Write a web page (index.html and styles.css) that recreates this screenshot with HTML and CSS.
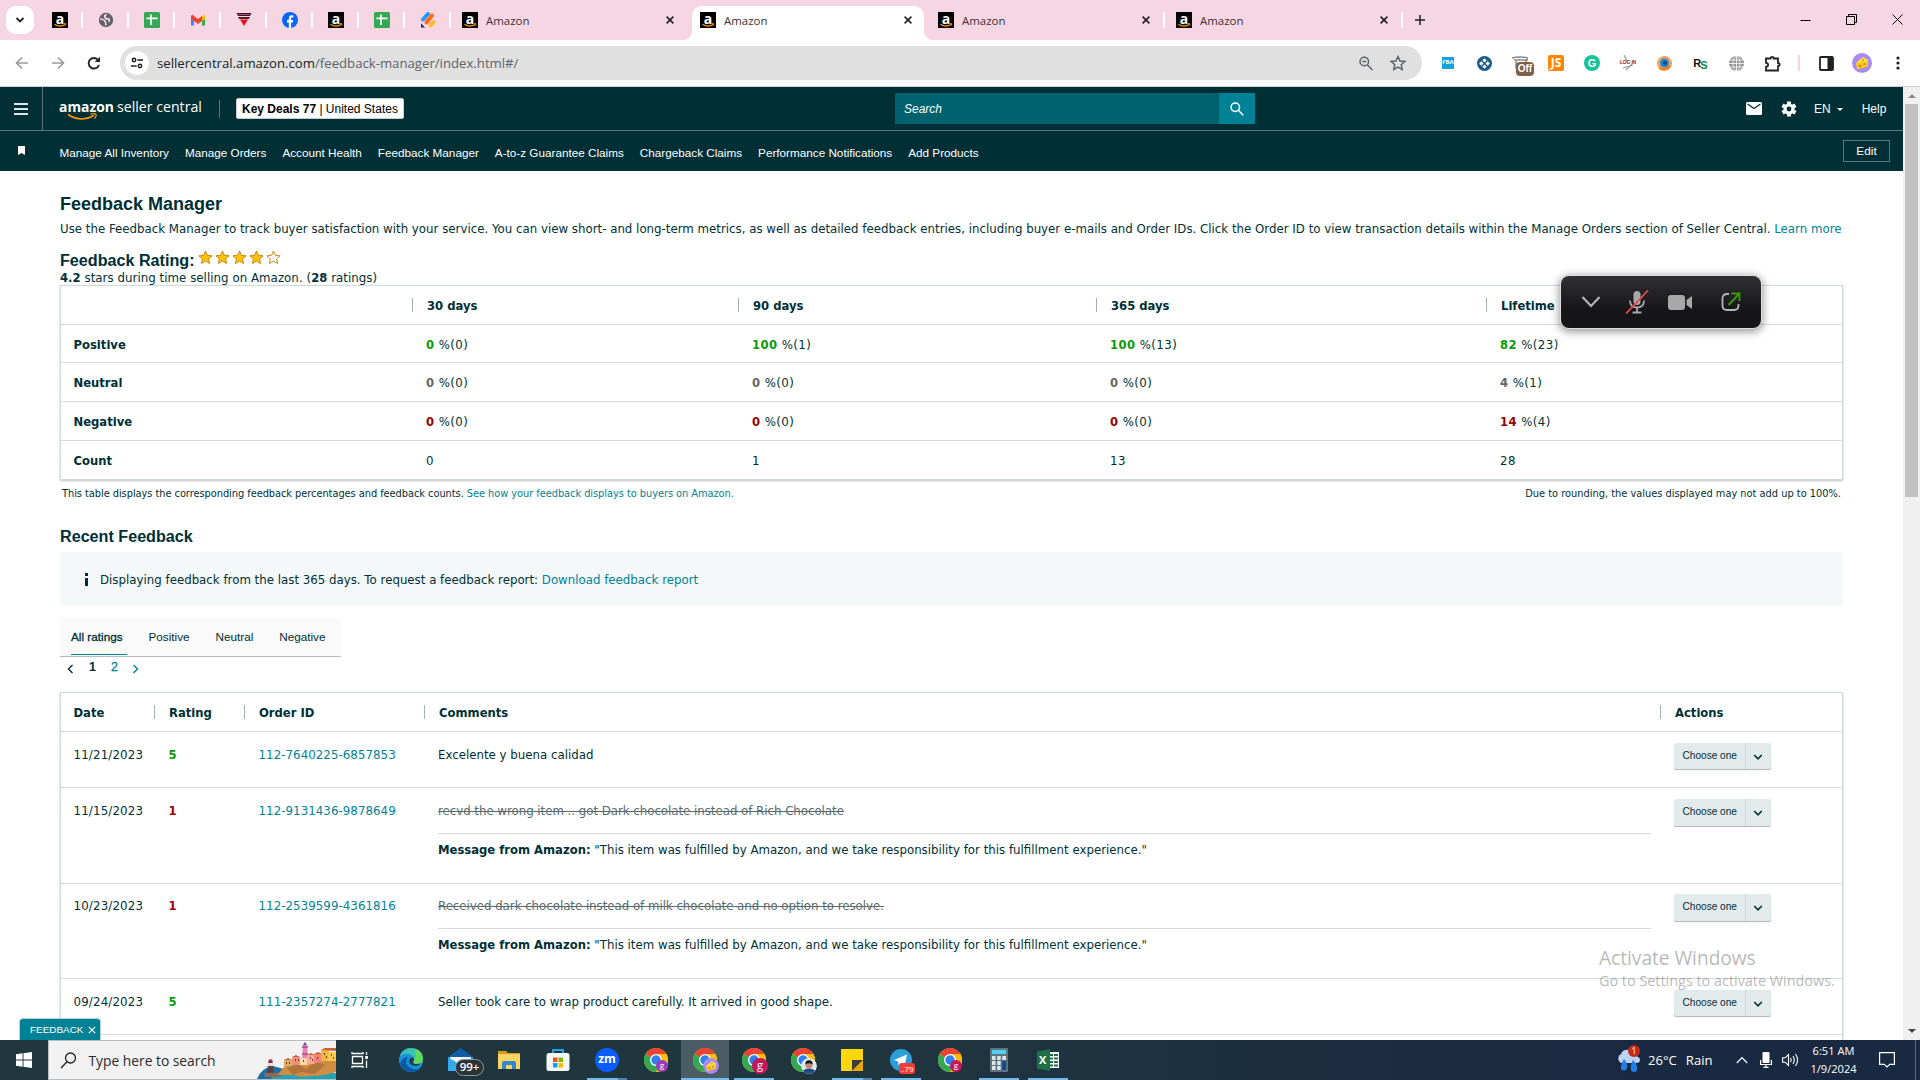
FILE: index.html
```
<!DOCTYPE html>
<html lang="en">
<head>
    <meta charset="UTF-8">
    <meta name="viewport" content="width=device-width, initial-scale=1.0">
    <title>Amazon</title>
    <link rel="stylesheet" href="styles.css">
</head>
<body>
    <!-- shared icons -->
    <svg class="defs" width="0" height="0">
        <symbol id="smile" viewBox="0 0 16 16">
            <path d="M2.5 12.3q5.300 3.400 10.600.2" fill="none" stroke="#f90" stroke-width="1.300"/>
            <path d="M11.600 11.600h2.200l-.4 2" fill="none" stroke="#f90" stroke-width=".9"/>
        </symbol>
        <symbol id="sheet" viewBox="0 0 16 16">
            <rect width="16" height="16" rx="1.500" fill="#34a853"/>
            <path d="M7 2.500V13M2.500 6.300h11" stroke="#fff" stroke-width="1.700"/>
        </symbol>
        <symbol id="close" viewBox="0 0 10 10"><path d="M1.600 1.600l6.800 6.800M8.400 1.600L1.600 8.400" stroke="#202124" stroke-width="1.600"/></symbol>
        <symbol id="star" viewBox="0 0 15 15"><path d="M7.500 1l1.900 4.300 4.700.5-3.500 3.100 1 4.600-4.100-2.400-4.100 2.400 1-4.600L.9 5.800l4.700-.5z" stroke="#c98b1b" stroke-width="1"/></symbol>
        <symbol id="down" viewBox="0 0 10 8"><path d="M1.200 2l3.800 3.800L8.800 2" fill="none" stroke="#002f36" stroke-width="1.600"/></symbol>
        <symbol id="chrome" viewBox="0 0 24 24">
            <circle cx="12" cy="12" r="12" fill="#fbbc05"/>
            <path d="M12 12L1.600 6A12 12 0 0 1 22.400 6z" fill="#ea4335"/>
            <path d="M1.600 6A12 12 0 0 0 12 24l5.200-9L12 12z" fill="#34a853"/>
            <path d="M12 6h10.400A12 12 0 0 1 12 24l5.200-9z" fill="#fbbc05"/>
            <circle cx="12" cy="12" r="6" fill="#fff"/>
            <circle cx="12" cy="12" r="4.700" fill="#2f7ff0"/>
        </symbol>
        <symbol id="cheese" viewBox="0 0 20 20">
            <circle cx="10" cy="10" r="10" fill="#a98af5"/>
            <path d="M4 10l7-6 5 3v6l-10 3z" fill="#fde23a"/>
            <path d="M4 10l12-2v5.500L5 16.500z" fill="#fbc91d"/>
            <circle cx="8" cy="13" r="1.300" fill="#c98a10"/><circle cx="12.500" cy="11" r="1.100" fill="#c98a10"/><circle cx="11" cy="7" r=".9" fill="#c98a10"/>
        </symbol>
    </svg>

    <div class="tabstrip">
        <div class="tab-search"><svg width="10" height="8" viewBox="0 0 10 8"><path d="M1.500 2L5 5.500 8.500 2" fill="none" stroke="#202124" stroke-width="1.800"/></svg></div>
        <div class="pinned"><i class="amz">a<svg width="16" height="16"><use href="#smile"/></svg></i></div>
        <div class="pinned"><svg width="16" height="16" viewBox="0 0 16 16"><circle cx="8" cy="8" r="7.200" fill="#5f6368"/><path d="M8.500 2.500Q6 3.500 7 5.500t3 1.500 1 3M2 7q3 0 4.500 1.500T8 13.500" fill="none" stroke="#f7d6e4" stroke-width="1.700"/></svg></div>
        <div class="pinned"><svg width="16" height="16"><use href="#sheet"/></svg></div>
        <div class="pinned"><svg width="16" height="16" viewBox="0 0 16 16"><path d="M1 3v10.500h3V8z" fill="#4285f4"/><path d="M15 3v10.500h-3V8z" fill="#34a853"/><path d="M12 4l2-1.200 1 1.200v3l-3 2z" fill="#fbbc04"/><path d="M1 4l1.500-1.300L8 7l4-3v5l-4 3-4-3-3-2z" fill="#ea4335"/></svg></div>
        <div class="pinned"><svg width="16" height="16" viewBox="0 0 16 16"><path d="M.5 1h15L14 4H2z" fill="#3c1626"/><path d="M2 5h12l-1 2H3z" fill="#5b1c24"/><path d="M4 7.500h8L8 14z" fill="#e8121c"/><path d="M2 2.500h12" stroke="#e6a" stroke-width=".6"/></svg></div>
        <div class="pinned"><svg width="16" height="16" viewBox="0 0 16 16"><circle cx="8" cy="8" r="8" fill="#0866ff"/><path d="M6.800 16v-5.400H5V8h1.800V6.700c0-2.500 1.200-3.500 3-3.500.7 0 1.300.1 1.500.2v2.100h-1c-1 0-1.200.4-1.200 1.200V8h2.100l-.4 2.600H9.100V16z" fill="#fff"/></svg></div>
        <div class="pinned"><i class="amz">a<svg width="16" height="16"><use href="#smile"/></svg></i></div>
        <div class="pinned"><svg width="16" height="16"><use href="#sheet"/></svg></div>
        <div class="pinned"><svg width="16" height="16" viewBox="0 0 16 16"><path d="M3 7.500L8 2" stroke="#1e9bff" stroke-width="4" stroke-linecap="round"/><path d="M6.500 10.500l5.500-7" stroke="#ff6a13" stroke-width="4" stroke-linecap="round"/><path d="M10.500 13.500l3-3.500" stroke="#fdb827" stroke-width="4" stroke-linecap="round"/><path d="M1 11.500l4 4H1z" fill="#101c4d"/></svg></div>
        <div class="tab first"><i class="amz">a<svg width="16" height="16"><use href="#smile"/></svg></i><span>Amazon</span><svg width="10" height="10"><use href="#close"/></svg></div>
        <div class="tab active"><i class="amz">a<svg width="16" height="16"><use href="#smile"/></svg></i><span>Amazon</span><svg width="10" height="10"><use href="#close"/></svg></div>
        <div class="tab sep"><i class="amz">a<svg width="16" height="16"><use href="#smile"/></svg></i><span>Amazon</span><svg width="10" height="10"><use href="#close"/></svg></div>
        <div class="tab sep"><i class="amz">a<svg width="16" height="16"><use href="#smile"/></svg></i><span>Amazon</span><svg width="10" height="10"><use href="#close"/></svg></div>
        <svg class="plus" width="12" height="12" viewBox="0 0 12 12"><path d="M6 1v10M1 6h10" stroke="#202124" stroke-width="1.500"/></svg>
        <div class="win-buttons">
            <svg width="11" height="11" viewBox="0 0 11 11"><path d="M.5 6.500h10" stroke="#000"/></svg>
            <svg width="11" height="11" viewBox="0 0 11 11"><path d="M.5 2.500h8v8h-8zM2.500 2.500v-2h8v8h-2" fill="none" stroke="#000"/></svg>
            <svg width="11" height="11" viewBox="0 0 11 11"><path d="M.5.500l10 10M10.500.500l-10 10" stroke="#000"/></svg>
        </div>
    </div>

    <div class="toolbar">
        <div class="nav-buttons">
            <svg width="14" height="14" viewBox="0 0 14 14"><path d="M13 7H2M7 1.500L1.500 7 7 12.500" fill="none" stroke="#9a9a9a" stroke-width="1.600"/></svg>
            <svg width="14" height="14" viewBox="0 0 14 14"><path d="M1 7h11M7 1.500L12.500 7 7 12.500" fill="none" stroke="#9a9a9a" stroke-width="1.600"/></svg>
            <svg width="14" height="14" viewBox="0 0 14 14"><path d="M12 9a5.300 5.300 0 1 1-.8-5" fill="none" stroke="#202124" stroke-width="1.900"/><path d="M13 .8V6H7.800z" fill="#202124"/></svg>
        </div>
        <div class="omnibox">
            <div class="site-info"><svg width="12" height="12" viewBox="0 0 12 12"><g fill="none" stroke="#202124" stroke-width="1.500"><circle cx="3" cy="3" r="1.700"/><path d="M6.300 3H12M0 9h5.700"/><circle cx="9" cy="9" r="1.700"/></g></svg></div>
            <div class="url">sellercentral.amazon.com<span>/feedback-manager/index.html#/</span></div>
            <svg class="zoom" width="14" height="15" viewBox="0 0 14 15"><g fill="none" stroke="#5f6368" stroke-width="1.500"><circle cx="5.300" cy="5.500" r="4.300"/><path d="M8.500 9l5 5M3.300 5.500h4"/></g></svg>
            <svg width="16" height="16" viewBox="0 0 16 16"><path d="M8 1.500l2 4.500 4.800.5-3.600 3.200 1 4.700L8 12l-4.200 2.400 1-4.700L1.200 6.500 6 6z" fill="none" stroke="#5f6368" stroke-width="1.500"/></svg>
        </div>
        <div class="extensions">
            <span class="fba">FBA</span>
            <svg width="15" height="15" viewBox="0 0 14 14"><circle cx="7" cy="7" r="7" fill="#1d5c8a"/><path d="M7 2l2 2-2 2-2-2zM7 8l2 2-2 2-2-2zM4 5l2 2-2 2-2-2zM10 5l2 2-2 2-2-2z" fill="#fff"/></svg>
            <div class="off-ext"><svg width="16" height="14" viewBox="0 0 16 14"><path d="M0 2q8-2 16 0v2H2M4 5v7h10V4" fill="none" stroke="#888" stroke-width="1.500"/></svg><span>Off</span></div>
            <span class="js">JS</span>
            <span class="gram">G</span>
            <span class="login"><svg width="16" height="16" viewBox="0 0 16 16"><path d="M4 0l3 6M12 9l-6 6M3 13l10-3" stroke="#9b9b9b" stroke-width="1.100"/></svg><b>LOG IN</b></span>
            <svg width="15" height="15" viewBox="0 0 15 15"><circle cx="7.500" cy="7.500" r="7.500" fill="#f9a35a"/><circle cx="7.500" cy="7" r="4.500" fill="#1d8ad6"/><circle cx="8" cy="7" r="2" fill="#174a7c"/><path d="M2 12q6 3 11-2" stroke="#f47b20" stroke-width="2" fill="none"/></svg>
            <span class="rs">R<i>S</i></span>
            <svg width="15" height="15" viewBox="0 0 15 15"><circle cx="7.500" cy="7.500" r="7.500" fill="#949494"/><g fill="none" stroke="#fff" stroke-width=".8"><ellipse cx="7.500" cy="7.500" rx="3.500" ry="7.300"/><path d="M7.500 0v15M0 7.500h15M1 4h13M1 11h13"/></g></svg>
            <svg width="17" height="17" viewBox="0 0 17 17"><path d="M2 3.500h4.500a1.600 1.600 0 0 1 3.200 0H14V8a1.500 1.500 0 0 1 0 3.200V15.500H2v-3.700c2.800 0 2.800-4 0-4z" fill="none" stroke="#202124" stroke-width="1.800"/></svg>
        </div>
        <div class="toolbar-sep"></div>
        <svg class="panel" width="15" height="15" viewBox="0 0 15 15"><rect x="1" y="1" width="13" height="13" rx="1" fill="none" stroke="#202124" stroke-width="1.800"/><path d="M8.500 1H14v13H8.500z" fill="#202124"/></svg>
        <svg class="profile" width="20" height="20"><use href="#cheese"/></svg>
        <svg class="more" width="4" height="14" viewBox="0 0 4 14"><g fill="#202124"><circle cx="2" cy="2" r="1.600"/><circle cx="2" cy="7" r="1.600"/><circle cx="2" cy="12" r="1.600"/></g></svg>
    </div>

    <div class="viewport">
        <div class="page">
            <header class="header">
                <div class="menu"><i></i><i></i><i></i></div>
                <div class="logo"><b>amazon</b><span>seller central</span>
                    <svg width="32" height="8" viewBox="0 0 32 8"><path d="M1 1.500q13 8.500 26 1" fill="none" stroke="#f90" stroke-width="1.600"/><path d="M23.500 1.200q4-1 5.300 0t-1.300 4.500" fill="none" stroke="#f90" stroke-width="1.200"/></svg>
                </div>
                <div class="account"><b>Key Deals 77</b> | United States</div>
                <div class="search"><span>Search</span><div class="search-go"><svg width="14" height="14" viewBox="0 0 14 14"><g fill="none" stroke="#fff" stroke-width="1.500"><circle cx="5.300" cy="5.300" r="4.200"/><path d="M8.300 8.300l5 5"/></g></svg></div></div>
                <svg class="mail" width="16" height="13" viewBox="0 0 16 13"><rect width="16" height="13" rx="1.500" fill="#fff"/><path d="M1.500 2L8 6.500 14.500 2" fill="none" stroke="#002f36" stroke-width="1.300"/></svg>
                <svg class="gear" width="16" height="16" viewBox="0 0 16 16"><path d="M8 .5v15M1.500 4.250l13 7.500M1.500 11.750l13-7.500" stroke="#fff" stroke-width="4"/><circle cx="8" cy="8" r="5.500" fill="#fff"/><circle cx="8" cy="8" r="2.400" fill="#002f36"/></svg>
                <span class="lang">EN</span>
                <i class="caret"></i>
                <span class="help">Help</span>
            </header>
            <nav class="favorites">
                <svg width="7" height="9" viewBox="0 0 7 9"><path d="M0 0h7v9L3.500 7 0 9z" fill="#fff"/></svg>
                <div class="links">
                    <a>Manage All Inventory</a><a>Manage Orders</a><a>Account Health</a><a>Feedback Manager</a><a>A-to-z Guarantee Claims</a><a>Chargeback Claims</a><a>Performance Notifications</a><a>Add Products</a>
                </div>
                <button class="edit">Edit</button>
            </nav>

            <main>
                <h1>Feedback Manager</h1>
                <p class="intro">Use the Feedback Manager to track buyer satisfaction with your service. You can view short- and long-term metrics, as well as detailed feedback entries, including buyer e-mails and Order IDs. Click the Order ID to view transaction details within the Manage Orders section of Seller Central. <a>Learn more</a></p>
                <div class="rating">
                    <h2>Feedback Rating:</h2>
                    <div class="stars">
                        <svg width="15" height="15" fill="#ffc107"><use href="#star"/></svg><svg width="15" height="15" fill="#ffc107"><use href="#star"/></svg><svg width="15" height="15" fill="#ffc107"><use href="#star"/></svg><svg width="15" height="15" fill="#ffc107"><use href="#star"/></svg><svg width="15" height="15" fill="#fff"><use href="#star"/></svg>
                    </div>
                </div>
                <p class="score"><b>4.2</b> stars during time selling on Amazon. (<b>28</b> ratings)</p>

                <div class="card summary">
                    <div class="row head"><b></b><b>30 days</b><b>90 days</b><b>365 days</b><b>Lifetime</b></div>
                    <div class="row short pos"><strong>Positive</strong><span><b>0</b> %(0)</span><span><b>100</b> %(1)</span><span><b>100</b> %(13)</span><span><b>82</b> %(23)</span></div>
                    <div class="row neu"><strong>Neutral</strong><span><b>0</b> %(0)</span><span><b>0</b> %(0)</span><span><b>0</b> %(0)</span><span><b>4</b> %(1)</span></div>
                    <div class="row neg"><strong>Negative</strong><span><b>0</b> %(0)</span><span><b>0</b> %(0)</span><span><b>0</b> %(0)</span><span><b>14</b> %(4)</span></div>
                    <div class="row last"><strong>Count</strong><span>0</span><span>1</span><span>13</span><span>28</span></div>
                </div>
                <div class="notes"><span class="about">This table displays the corresponding feedback percentages and feedback counts. <a>See how your feedback displays to buyers on Amazon.</a></span><span>Due to rounding, the values displayed may not add up to 100%.</span></div>

                <h2 class="recent">Recent Feedback</h2>
                <div class="alert"><i class="info"></i><span>Displaying feedback from the last 365 days. To request a feedback report: <a>Download feedback report</a></span></div>
                <div class="filters"><span class="on">All ratings</span><span>Positive</span><span>Neutral</span><span>Negative</span></div>
                <div class="pager">
                    <svg width="7" height="10" viewBox="0 0 7 10"><path d="M5.500 1L1.500 5l4 4" fill="none" stroke="#002f36" stroke-width="1.400"/></svg>
                    <b>1</b><a>2</a>
                    <svg width="7" height="10" viewBox="0 0 7 10"><path d="M1.500 1l4 4-4 4" fill="none" stroke="#008296" stroke-width="1.400"/></svg>
                </div>

                <div class="card entries">
                    <div class="row head"><b>Date</b><b>Rating</b><b>Order ID</b><b>Comments</b><b>Actions</b></div>
                    <div class="row pos">
                        <span>11/21/2023</span><b>5</b><a>112-7640225-6857853</a>
                        <div class="comment"><p>Excelente y buena calidad</p></div>
                        <div class="choose"><span>Choose one</span><i><svg width="10" height="8"><use href="#down"/></svg></i></div>
                    </div>
                    <div class="row neg long">
                        <span>11/15/2023</span><b>1</b><a>112-9131436-9878649</a>
                        <div class="comment"><p><s>recvd the wrong item .. got Dark chocolate instead of Rich Chocolate</s></p><p class="reply"><strong>Message from Amazon:</strong> "This item was fulfilled by Amazon, and we take responsibility for this fulfillment experience."</p></div>
                        <div class="choose"><span>Choose one</span><i><svg width="10" height="8"><use href="#down"/></svg></i></div>
                    </div>
                    <div class="row neg long third">
                        <span>10/23/2023</span><b>1</b><a>112-2539599-4361816</a>
                        <div class="comment"><p><s>Received dark chocolate instead of milk chocolate and no option to resolve.</s></p><p class="reply"><strong>Message from Amazon:</strong> "This item was fulfilled by Amazon, and we take responsibility for this fulfillment experience."</p></div>
                        <div class="choose"><span>Choose one</span><i><svg width="10" height="8"><use href="#down"/></svg></i></div>
                    </div>
                    <div class="row pos">
                        <span>09/24/2023</span><b>5</b><a>111-2357274-2777821</a>
                        <div class="comment"><p>Seller took care to wrap product carefully. It arrived in good shape.</p></div>
                        <div class="choose"><span>Choose one</span><i><svg width="10" height="8"><use href="#down"/></svg></i></div>
                    </div>
                    <div class="row"></div>
                </div>
            </main>
        </div>
        <div class="scrollbar"><i class="up"></i><div class="thumb"></div><i class="dn"></i></div>

        <div class="feedback-tab">FEEDBACK <svg width="8" height="8" viewBox="0 0 8 8"><path d="M.8.800l6.400 6.400M7.200.800L.8 7.200" stroke="#fff" stroke-width="1.200"/></svg></div>
        <div class="watermark"><div>Activate Windows</div><p>Go to Settings to activate Windows.</p></div>
        <div class="meeting">
            <svg width="20" height="14" viewBox="0 0 20 14"><path d="M1.500 2l8.500 9 8.500-9" fill="none" stroke="#b4b4b4" stroke-width="2.200"/></svg>
            <svg width="24" height="24" viewBox="0 0 24 24"><rect x="8.500" y="1" width="7" height="14" rx="3.500" fill="#a8a8a8"/><path d="M5 10.500q0 7 7 7t7-7M12 17.500V22M7.500 22.500h9" fill="none" stroke="#a8a8a8" stroke-width="1.800"/><path d="M1 23.500L23 .5" stroke="#e34b4b" stroke-width="1.800"/></svg>
            <svg width="24" height="15" viewBox="0 0 24 15"><rect y="0" width="17" height="15" rx="3" fill="#a8a8a8"/><path d="M18.500 5L24 1v13l-5.500-4z" fill="#a8a8a8"/></svg>
            <svg width="20" height="20" viewBox="0 0 20 20"><path d="M8 2H6Q1.500 2 1.500 6.500v7Q1.500 18 6 18h7q4.500 0 4.500-4.500V12" fill="none" stroke="#b4b4b4" stroke-width="1.800"/><path d="M7.500 13L18 2M10.500 1.500h8V9" fill="none" stroke="#3c9a0c" stroke-width="1.900"/></svg>
        </div>
    </div>

    <div class="taskbar">
        <div class="start"><svg width="16" height="16" viewBox="0 0 16 16"><path d="M0 2.200L6.600 1.300v6.200H0zM7.500 1.200L16 0v7.500H7.500zM0 8.400h6.600v6.300L0 13.800zM7.500 8.400H16V16l-8.500-1.200z" fill="#fff"/></svg></div>
        <div class="task-search">
            <svg width="17" height="17" viewBox="0 0 17 17"><g fill="none" stroke="#222" stroke-width="1.300"><circle cx="10.500" cy="6" r="5"/><path d="M7 9.800L1 16"/></g></svg>
            <span>Type here to search</span>
            <svg class="coast" width="79" height="38" viewBox="0 0 79 38">
                <path d="M0 38q4-11 16-13l14 4 49 4v5z" fill="#1a6fa3"/>
                <path d="M16 35q30-3 63-3v6H14z" fill="#23a3b8"/>
                <path d="M7 33q7-4 15 0l2 3H8z" fill="#8d6a58"/>
                <path d="M20 34l8-9 12-4 39-6v16q-12 4-26 4-10 2-16-1z" fill="#cf8d42"/>
                <path d="M30 27l10-4 9 5 11-8 8 4-10 9-14-2-8 3z" fill="#b0753a"/>
                <path d="M11.500 20h4l1.500 12h-7z" fill="#584249"/><path d="M11 22h5v3h-5z" fill="#e8e0dc"/><path d="M11 20q2.500-4 5 0z" fill="#d0334e"/>
                <path d="M46 4h4l1 17h-6z" fill="#ef7fb0"/><path d="M45 6h6M45 13h6" stroke="#9d4f98" stroke-width="1.500"/><path d="M46 4l2-3 2 3z" fill="#7d4a8c"/>
                <path d="M27 19h8v6h-8z" fill="#d9b06a"/><path d="M35 16h8v8h-8z" fill="#f0907c"/><path d="M43 17h8v7h-8z" fill="#fbd9a8"/><path d="M50 14h8v9h-8z" fill="#f7a99a"/><path d="M57 13h8v9h-8z" fill="#ee8378"/><path d="M64 9h8v11h-8z" fill="#f5b93e"/><path d="M71 11h8v9h-8z" fill="#fdca4e"/>
                <path d="M27 19l4-2 4 2zM35 16l4-2 4 2zM50 14l4-2 4 2zM57 13l4-2 4 2zM64 9l4-2h11v3z" fill="#c9613a"/>
                <path d="M29 22h1M32 22h1M38 19h1M41 19h1M46 20h1M53 17h1M55 19h1M60 17h1M67 13h1M69 16h1M74 14h1M76 17h1" stroke="#7a3a2e" stroke-width="2"/>
            </svg>
        </div>
        <div class="apps">
            <div class="app view"><svg width="18" height="18" viewBox="0 0 18 18"><path d="M1.500 5.500h10v7h-10zM1 1v1.500h11V1M1 17v-1.500h11V17M15.500 1v3M15.500 9.500V17" fill="none" stroke="#fff" stroke-width="1.300"/><path d="M14.200 5h2.800v3h-2.800z" fill="#fff"/></svg></div>
            <div class="app"><svg width="24" height="24" viewBox="0 0 24 24"><circle cx="12" cy="12" r="12" fill="#1793dc"/><path d="M1 8Q4 0 12 0q12 1 12 11 0 5-6 5-4 0-4-2 2-2 0-5-3-4-8-3-3 .5-5 2z" fill="#39c3b2"/><path d="M15 .5Q24 3 24 11q0 5-6 5-4 0-4-2 5-6 1-13.500z" fill="#62d85a"/><path d="M9 9q-4 6 1 10 5 4 12 1-4 4-10 4Q4 24 1 16 3 9 9 9z" fill="#0c59a4"/><path d="M14 9q2 3 0 5 0 2 4 2 2 0 4-1-2 3-6 3-6-1-6-5 0-3 4-4z" fill="#1e3d55"/></svg></div>
            <div class="app mailapp"><svg width="25" height="24" viewBox="0 0 25 24"><path d="M0 9L12.500 0 25 9v14H0z" fill="#0f5fa8"/><path d="M2 9h21v7H2z" fill="#f4f8fb"/><path d="M0 9l12.500 8L0 23z" fill="#35a8ec"/><path d="M25 9l-12.500 8L25 23z" fill="#35a8ec"/><path d="M0 23l12.500-9L25 23z" fill="#35b1f1"/></svg><span>99+</span></div>
            <div class="app"><svg width="22" height="20" viewBox="0 0 22 20"><path d="M0 1h8l2 2h12v4H0z" fill="#d99a1b"/><path d="M0 4h22v15H0z" fill="#fcd462"/><path d="M4 19v-6q0-2 2-2h10q2 0 2 2v6h-4v-4H8v4z" fill="#2f87d2"/></svg></div>
            <div class="app"><svg width="24" height="24" viewBox="0 0 24 24"><path d="M7 7V2h10v5" fill="none" stroke="#1ca8ef" stroke-width="2"/><rect x=".5" y="5" width="23" height="18" rx="2.500" fill="#f5f6f7"/><path d="M7 9.500h4.500V14H7z" fill="#f25022"/><path d="M12.500 9.500H17V14h-4.500z" fill="#7fba00"/><path d="M7 15h4.500v4.500H7z" fill="#00a4ef"/><path d="M12.500 15H17v4.500h-4.500z" fill="#ffb900"/></svg></div>
            <div class="app run more-win"><span class="zm">zm</span></div>
            <div class="app"><svg width="24" height="24"><use href="#chrome"/></svg><span class="who">g</span></div>
            <div class="app current"><svg width="24" height="24"><use href="#chrome"/></svg><svg class="who big" width="15" height="15"><use href="#cheese"/></svg></div>
            <div class="app run"><svg width="24" height="24"><use href="#chrome"/></svg><span class="who big red">g</span></div>
            <div class="app"><svg width="24" height="24"><use href="#chrome"/></svg><svg class="who big" width="15" height="15" viewBox="0 0 15 15"><circle cx="7.500" cy="7.500" r="7.500" fill="#dfe8ef"/><path d="M1.500 12q6-5 12 0-6 6-12 0z" fill="#1a4c8c"/><circle cx="7.500" cy="6.500" r="3.300" fill="#c08a6c"/><path d="M4 6q0-4 3.500-4T11 6q-3.500-2-7 0z" fill="#161616"/></svg></div>
            <div class="app run more-win"><svg width="22" height="22" viewBox="0 0 22 22"><path d="M0 0h22v11L12 22H0z" fill="#ffd60a"/><path d="M11 11h11L11 22z" fill="#3b3b3b"/><path d="M22 11v11H11z" fill="#e8a800"/></svg></div>
            <div class="app run"><svg width="22" height="22" viewBox="0 0 22 22"><circle cx="11" cy="11" r="11" fill="#2a9fda"/><path d="M4 11l13-5.500-2.500 12-4-3-2 2-.5-4z" fill="#fff"/></svg><span class="count">..79</span></div>
            <div class="app"><svg width="24" height="24"><use href="#chrome"/></svg><span class="who red">g</span></div>
            <div class="app run"><svg width="18" height="24" viewBox="0 0 18 24"><rect width="18" height="24" rx="1" fill="#5f7280"/><path d="M2 2h14v4H2z" fill="#4fd0f5"/><path d="M2 8h3.500v4H2zM7.200 8h3.500v4H7.200zM12.300 8H16v4h-3.700zM2 13h3.500v4H2zM7.200 13h3.500v4H7.200zM2 18h3.500v4H2zM7.200 18h3.500v4H7.200z" fill="#dde5ea"/><path d="M12.300 13H16v9h-3.700z" fill="#0b4a8f"/></svg></div>
            <div class="app run excel"><svg width="22" height="22" viewBox="0 0 22 22"><path d="M11 3h11v16H11z" fill="#fff"/><path d="M13 5h3v2h-3zM17 5h4v2h-4zM13 8.500h3v2h-3zM17 8.500h4v2h-4zM13 12h3v2h-3zM17 12h4v2h-4zM13 15.500h3v2h-3zM17 15.500h4v2h-4z" fill="#1e7145"/><path d="M0 2.500L13 0v22L0 19.500z" fill="#1e7145"/></svg><b>X</b></div>
        </div>
        <div class="tray">
            <div class="weather"><svg width="24" height="24" viewBox="0 0 24 24"><path d="M5 15a5 5 0 0 1 0-9q2-5 8-4 6 0 7 6 4 1 4 4t-4 3z" fill="#bdd3f2"/><path d="M8 11q4 5 3 9a3 3 0 0 1-6-1q0-3 3-8zM17 12q5 5 4 9a3 3 0 0 1-6 0q-1-4 2-9z" fill="#1f7ee8"/></svg><span>1</span></div>
            <span class="temp">26°C</span><span class="temp">Rain</span>
            <svg class="t-up" width="12" height="8" viewBox="0 0 12 8"><path d="M.8 7L6 1.500 11.200 7" fill="none" stroke="#fff" stroke-width="1.200"/></svg>
            <svg class="t-mic" width="12" height="16" viewBox="0 0 12 16"><rect x="2.500" width="7" height="11" rx="1" fill="#fff"/><path d="M.6 8v4.500h10.800V8M6 12.500V15M3.500 15.300h5" fill="none" stroke="#fff" stroke-width="1.200"/></svg>
            <svg class="t-vol" width="17" height="14" viewBox="0 0 17 14"><path d="M.6 4.800h2.600L6.500 1.500v11L3.200 9.200H.6zM8.500 5q1.300 2 0 4M11 3q2.600 4 0 8M13.500 1q4.200 6 0 12" fill="none" stroke="#fff" stroke-width="1.100"/></svg>
            <div class="clock"><span>6:51 AM</span><span>1/9/2024</span></div>
            <svg class="t-note" width="16" height="16" viewBox="0 0 16 16"><path d="M.6.700h14.800v11.600h-4.600L8 15l-2.800-2.700H.6z" fill="none" stroke="#fff" stroke-width="1.200"/></svg>
            <i class="peek"></i>
        </div>
    </div>
</body>
</html>
```
FILE: styles.css
```
* {
    box-sizing: border-box;
}
body {
    margin: 0;
    width: 1920px;
    height: 1080px;
    overflow: hidden;
    display: flex;
    flex-direction: column;
    background: #fff;
    font-family: "DejaVu Sans", sans-serif;
    font-size: 11.8px;
    color: #002f36;
}
p, h1, h2 {
    margin: 0;
}
svg {
    display: block;
    flex: none;
}
a {
    color: #008296;
}
b, strong {
    font-size: 11.6px;
}
.defs {
    position: absolute;
}

/* tab strip */
.tabstrip {
    height: 40px;
    flex: none;
    display: flex;
    background: #f7d6e4;
    padding-left: 6px;
    font-family: "Open Sans", sans-serif;
}
.tab-search {
    width: 28px;
    height: 28px;
    margin: 6px 3px 0 0;
    border-radius: 10px;
    background: #fff;
    display: flex;
    align-items: center;
    justify-content: center;
}
.pinned {
    width: 46px;
    height: 16px;
    margin-top: 12px;
    padding-left: 15px;
    border-right: 2px solid #fff;
}
.amz {
    display: block;
    flex: none;
    width: 16px;
    height: 16px;
    position: relative;
    background: #000;
    color: #fff;
    font: 700 14px/13px "Open Sans", sans-serif;
    text-align: center;
}
.amz svg {
    position: absolute;
    left: 0;
    top: 0;
}
.tab {
    display: flex;
    align-items: center;
    width: 238px;
    height: 34px;
    margin-top: 6px;
    padding: 0 21px 6px 14px;
    font-size: 11.45px;
    color: #3c3035;
    position: relative;
}
.tab span {
    flex: 1;
    padding-left: 8px;
}
.tab.first {
    width: 241px;
    padding: 0 17px 6px 11px;
}
.tab.active {
    width: 232px;
    padding: 0 11px 6px 8px;
    border-radius: 10px 10px 0 0;
    background: #fff;
}
/* curved feet of the active tab */
.tab.active::before, .tab.active::after {
    content: "";
    position: absolute;
    bottom: 0;
    width: 10px;
    height: 10px;
}
.tab.active::before {
    left: -10px;
    background: radial-gradient(circle at 0 0, transparent 10px, #fff 10.5px);
}
.tab.active::after {
    right: -10px;
    background: radial-gradient(circle at 100% 0, transparent 10px, #fff 10.5px);
}
.tab.sep::after {
    content: "";
    position: absolute;
    right: -3px;
    top: 6px;
    width: 2px;
    height: 16px;
    background: #fff;
}
.tab.sep {
    padding: 0 11px 6px 14px;
}
.plus {
    margin: 14px 0 0 14px;
}
.win-buttons {
    display: flex;
    gap: 35px;
    margin: 14px 17px 0 auto;
}

/* toolbar */
.toolbar {
    height: 47px;
    flex: none;
    display: flex;
    align-items: center;
    border-bottom: 1px solid #cfcfcf;
    background: #fff;
    padding: 0 20px 0 15px;
    font-family: "Open Sans", sans-serif;
}
.nav-buttons {
    display: flex;
    gap: 22px;
    width: 105px;
}
.omnibox {
    width: 1302px;
    height: 34px;
    border-radius: 17px;
    background: #e0e0e0;
    display: flex;
    align-items: center;
    padding: 0 16px 0 5px;
}
.site-info {
    width: 24px;
    height: 24px;
    border-radius: 12px;
    background: #fff;
    display: flex;
    align-items: center;
    justify-content: center;
}
.url {
    flex: 1;
    padding-left: 8px;
    font-size: 13.18px;
    color: #202124;
}
.url span {
    color: #5f6368;
}
.zoom {
    margin-right: 17px;
}
.extensions {
    display: grid;
    grid-template-columns: repeat(10, 36px);
    align-items: center;
    justify-items: center;
    margin-left: 8px;
}
.fba {
    width: 12px;
    height: 12px;
    background: #14a2dc;
    color: #fff;
    font-size: 6px;
    font-weight: 700;
    line-height: 11px;
    text-align: center;
}
.off-ext {
    position: relative;
}
.off-ext span {
    position: absolute;
    left: 4px;
    top: 6px;
    width: 18px;
    height: 14px;
    border-radius: 4px;
    background: #7d6047;
    color: #fff;
    font: 700 10px/14px "Liberation Sans", sans-serif;
    text-align: center;
}
.js {
    width: 16px;
    height: 16px;
    border-radius: 2px;
    background: #ff8400;
    color: #fff;
    font-size: 12px;
    font-weight: 700;
    line-height: 16px;
    text-align: center;
}
.gram {
    width: 16px;
    height: 16px;
    border-radius: 8px;
    background: #15c39a;
    color: #fff;
    font: 700 11px/16px "Liberation Sans", sans-serif;
    text-align: center;
}
.login {
    position: relative;
}
.login b {
    position: absolute;
    left: 0;
    top: 4px;
    font: 700 5px/6px "Liberation Sans", sans-serif;
    letter-spacing: -.2px;
    color: #a01515;
    white-space: nowrap;
}
.rs {
    font: 700 11px/14px "Liberation Sans", sans-serif;
    color: #111;
    letter-spacing: -1px;
}
.rs i {
    font-style: normal;
    color: #18823a;
    position: relative;
    top: 2px;
}
.toolbar-sep {
    width: 2px;
    height: 16px;
    margin-left: 8px;
    background: #f7d6e4;
}
.panel {
    margin-left: 19px;
}
.profile {
    margin-left: 18px;
}
.more {
    margin-left: 24px;
}

/* page */
.viewport {
    height: 953px;
    flex: none;
    display: flex;
    overflow: hidden;
    position: relative;
}
.page {
    width: 1903px;
}
.scrollbar {
    width: 17px;
    background: #f0f0f0;
    display: flex;
    flex-direction: column;
    align-items: center;
}
.thumb {
    width: 13px;
    height: 393px;
    background: #c1c1c1;
}
.up, .dn {
    width: 0;
    border: 4px solid transparent;
}
.up {
    margin: 3px 0 6px;
    border-bottom-color: #8a8a8a;
}
.dn {
    margin: auto 0 3px;
    border-top-color: #444;
}
.header {
    height: 44px;
    display: flex;
    align-items: center;
    background: #002f36;
    border-bottom: 1px solid #5c777b;
    color: #fff;
    font: 12px "Liberation Sans", sans-serif;
}
.header b {
    font-size: 12px;
}
.menu {
    width: 43px;
    height: 43px;
    border-right: 1px solid #5c777b;
    padding: 16px 14px 0;
}
.menu i {
    display: block;
    height: 2px;
    margin-bottom: 3px;
    background: #dfe6e7;
}
.logo {
    position: relative;
    width: 177px;
    height: 18px;
    border-right: 1px solid #5c777b;
    padding-left: 16px;
    font: 14.17px/18px "Open Sans", sans-serif;
    white-space: nowrap;
}
.logo b {
    font-size: 13.9px;
    margin-right: 3px;
}
.logo b, .logo span {
    position: relative;
    top: -2px;
}
.logo svg {
    position: absolute;
    left: 24px;
    top: 13px;
}
.account {
    width: 168px;
    height: 21px;
    margin-left: 16px;
    border-radius: 2px;
    border: 1px solid #c5cfd0;
    background: #fff;
    color: #000;
    line-height: 20px;
    padding-left: 5px;
    white-space: nowrap;
}
.search {
    width: 360px;
    height: 31px;
    margin-left: 491px;
    background: #00616e;
    display: flex;
    align-items: center;
    justify-content: space-between;
    padding-left: 9px;
    font-style: italic;
}
.search-go {
    width: 36px;
    height: 31px;
    background: #008296;
    display: flex;
    align-items: center;
    justify-content: center;
}
.mail {
    margin: 0 19px 0 491px;
}
.lang {
    margin: 0 6px 0 17px;
}
.caret {
    border: 3.5px solid transparent;
    border-top-color: #fff;
    margin-top: 4px;
}
.help {
    margin-left: 19px;
}
.favorites {
    height: 40px;
    display: flex;
    background: #002f36;
    padding: 0 13px 0 18px;
    font-family: "Liberation Sans", sans-serif;
}
.favorites > svg {
    margin-top: 15px;
}
.links {
    display: flex;
    gap: 16px;
    margin-left: 34.5px;
    line-height: 43px;
    font-size: 11.72px;
    flex: 1;
}
.links a {
    color: #fff;
}
.edit {
    width: 47px;
    height: 22px;
    margin-top: 9px;
    padding: 0;
    border: 1px solid #5c777b;
    background: none;
    color: #fff;
    font: 11.8px "Liberation Sans", sans-serif;
}

main {
    padding: 21px 60px 0;
}
h1 {
    font: 700 18px/24px "Liberation Sans", sans-serif;
}
h2 {
    font: 700 16.15px/20px "Liberation Sans", sans-serif;
}
.intro {
    margin-top: 5px;
    line-height: 16px;
    white-space: nowrap;
}
.rating {
    display: flex;
    height: 20px;
    margin-top: 13px;
}
.stars {
    display: flex;
    gap: 2px;
    margin-left: 3px;
}
.score {
    height: 15px;
    line-height: 17px;
    letter-spacing: .04px;
}
.card {
    border: 1px solid #d0d8d8;
    box-shadow: 0 1px 2px rgba(0, 0, 0, .25);
}
.row {
    display: grid;
    border-bottom: 1px solid #d5dbdb;
}
.row:last-child {
    border-bottom: 0;
}
.pos b {
    color: #0a9a0a;
}
.neu b {
    color: #666;
}
.neg b {
    color: #990000;
}
.head b {
    display: flex;
    padding-top: 1px;
}
.head b + b::before {
    content: "";
    width: 1px;
    height: 14px;
    margin: 11px 14px 0 0;
    background: #a2b1b1;
}
.summary .row {
    grid-template-columns: 351px 326px 358px 390px 1fr;
    height: 39px;
    line-height: 39px;
}
.summary .head {
    line-height: 38px;
}
.summary .short, .summary .last {
    height: 38px;
}
.row > strong {
    padding-left: 12.5px;
}
.summary .row > span {
    padding-left: 14px;
    letter-spacing: .42px;
}
.summary .row > span, .summary .row > strong {
    padding-top: .5px;
}
.notes {
    display: flex;
    justify-content: space-between;
    margin-top: 7px;
    padding: 0 2px;
    font-size: 9.83px;
    line-height: 14px;
}
.about {
    letter-spacing: -.045px;
}
.recent {
    margin-top: 25px;
}
.alert {
    height: 54px;
    margin-top: 6px;
    padding-left: 25px;
    background: #f4f8f9;
    display: flex;
    align-items: center;
}
.alert span {
    padding-top: 1px;
}
.info {
    width: 3px;
    height: 13px;
    margin-right: 12px;
    background: linear-gradient(#002f36 3px, transparent 3px, transparent 5px, #002f36 5px);
}
.filters {
    display: flex;
    width: 281px;
    height: 39px;
    margin-top: 12px;
    border-bottom: 1px solid #b6bcbc;
    background: #fafafa;
    font: 11.75px/37px "Liberation Sans", sans-serif;
    padding-left: 11px;
    white-space: nowrap;
}
.filters span {
    flex: none;
    margin-right: 25.8px;
}
.filters span:last-child {
    margin-right: 0;
}
.filters .on {
    width: 56px;
    height: 37px;
    margin-right: 21.5px;
    border-bottom: 1px solid #008296;
    -webkit-text-stroke: .3px #002f36;
}
.pager {
    display: flex;
    align-items: flex-start;
    height: 35px;
    padding: 5px 0 0 7px;
    font: 12.5px/10px "Liberation Sans", sans-serif;
}
.pager svg {
    margin-top: 2px;
}
.pager b {
    margin: 0 15px;
    font-size: 12.5px;
}
.pager a {
    margin-right: 14px;
    -webkit-text-stroke: .3px #008296;
}
.entries .row {
    grid-template-columns: 93px 90px 180px 1236px 1fr;
    height: 56px;
    line-height: 16px;
}
.entries .head {
    height: 39px;
    line-height: 38px;
}
.entries .head b:first-child {
    padding-left: 12.5px;
}
.entries .row > span {
    padding: 15px 0 0 12.5px;
    letter-spacing: .16px;
}
.entries .row:not(.head) > b, .entries .row > a {
    padding: 15px 0 0 14.5px;
    letter-spacing: .06px;
}
.comment {
    padding: 15px 9px 0 14px;
}
.comment s {
    color: #5a6b6e;
    letter-spacing: -.03px;
}
.entries .long {
    height: 96px;
}
.entries .third {
    height: 95px;
}
.entries .third > span, .entries .third > a, .entries .third:not(.head) > b, .third .comment {
    padding-top: 14px;
}
.reply {
    margin-top: 14px;
    padding-top: 8px;
    border-top: 1px solid #d5dbdb;
}
.choose {
    width: 97px;
    height: 26px;
    margin: 11px 0 0 13.5px;
    display: flex;
    border-radius: 2px;
    background: #e2eaeb;
    box-shadow: 0 1px 1px rgba(0, 0, 0, .3);
    font: 10.1px/25px "Liberation Sans", sans-serif;
}
.long .choose {
    height: 27px;
}
.third .choose {
    margin-top: 10px;
}
.choose span {
    width: 72px;
    border-right: 1px solid #cdd8d9;
    padding-left: 9px;
}
.choose i {
    padding: 10px 0 0 7.5px;
}

/* things floating over the page */
.feedback-tab {
    position: absolute;
    left: 19px;
    bottom: 0;
    width: 82px;
    height: 22px;
    border: 1px solid #b7d4d8;
    border-bottom: 0;
    border-radius: 4px 4px 0 0;
    background: #008296;
    color: #fff;
    display: flex;
    align-items: center;
    gap: 5px;
    padding-left: 10px;
    font: 9.93px "Liberation Sans", sans-serif;
}
.watermark {
    position: absolute;
    left: 1599px;
    top: 858px;
    color: rgba(120, 125, 125, .55);
    font-family: "Open Sans", sans-serif;
    white-space: nowrap;
}
.watermark div {
    font-size: 19.1px;
    line-height: 26px;
}
.watermark p {
    font-size: 14.4px;
    line-height: 19px;
}
.meeting {
    position: absolute;
    left: 1561px;
    top: 189px;
    width: 200px;
    height: 52px;
    border-radius: 8px;
    background: linear-gradient(#303032, #161618 65%);
    box-shadow: 0 0 0 1px #ddd, 0 2px 8px 2px rgba(0, 0, 0, .4);
    display: flex;
    align-items: center;
    padding-left: 20px;
}
.meeting svg:nth-child(2) {
    margin-left: 24px;
}
.meeting svg:nth-child(3) {
    margin-left: 19px;
}
.meeting svg:nth-child(4) {
    margin-left: 29px;
}

/* taskbar */
.taskbar {
    height: 40px;
    flex: none;
    display: flex;
    background: linear-gradient(90deg, #213740, #20363f 45%, #1c2f40 65%, #1a2942 85%);
    color: #fff;
    font-family: "Open Sans", sans-serif;
}
.start {
    width: 48px;
    padding: 12px 16px;
}
.task-search {
    width: 288px;
    border: 1px solid #b9bdbf;
    border-right: 0;
    background: #f2f2f2;
    color: #2b2b2b;
    display: flex;
    align-items: center;
    padding-left: 11px;
    font-size: 13.8px;
}
.task-search span {
    flex: 1;
    padding-left: 11.5px;
    white-space: nowrap;
}
.apps {
    display: flex;
    gap: 1px;
    margin-left: 3px;
}
.app {
    width: 48px;
    height: 40px;
    position: relative;
    display: flex;
    align-items: center;
    justify-content: center;
}
.view {
    width: 47px;
    padding-right: 5px;
}
.run::after, .current::after {
    content: "";
    position: absolute;
    left: 4px;
    right: 4px;
    bottom: 0;
    height: 2px;
    background: #76b9ed;
}
.more-win::after {
    background: linear-gradient(90deg, #76b9ed 31px, #5583ab 31px);
}
.current {
    background: #4a5c64;
}
.current::after {
    left: 0;
    right: 0;
}
.mailapp span {
    position: absolute;
    left: 19px;
    top: 19px;
    height: 17px;
    width: 29px;
    border: 1px solid #8d999e;
    border-radius: 9px;
    background: #2b3338;
    font-size: 11.5px;
    font-weight: 600;
    line-height: 14px;
    text-align: center;
}
.zm {
    width: 24px;
    height: 24px;
    border-radius: 12px;
    background: #0b5cff;
    font-size: 12px;
    font-weight: 700;
    line-height: 22px;
    text-align: center;
}
.who {
    position: absolute;
    left: 24px;
    top: 20px;
    width: 12px;
    height: 12px;
    border-radius: 8px;
    background: #9c3bb5;
    font-size: 8px;
    line-height: 10px;
    text-align: center;
}
.big {
    left: 22px;
    top: 18px;
    width: 16px;
    height: 16px;
    font-size: 11px;
    line-height: 14px;
    background: none;
}
.red {
    background: #c2185b;
}
.count {
    position: absolute;
    left: 22px;
    top: 23px;
    width: 16px;
    height: 11px;
    border-radius: 3px;
    background: #f23c34;
    font-size: 8px;
    line-height: 11px;
    text-align: center;
}
.excel b {
    position: absolute;
    left: 15px;
    top: 12px;
    font-size: 11px;
    line-height: 16px;
}
.tray {
    display: flex;
    align-items: center;
    margin-left: auto;
    width: 304px;
}
.weather {
    position: relative;
    width: 24px;
    margin-right: 8px;
}
.weather span {
    position: absolute;
    left: 12px;
    top: -3px;
    width: 12px;
    height: 12px;
    border-radius: 6px;
    background: #c42b1c;
    font-size: 8.5px;
    line-height: 12px;
    text-align: center;
}
.temp {
    font-size: 13.1px;
    margin-right: 9px;
}
.t-up {
    margin-left: 14.5px;
}
.t-mic {
    margin-left: 11.5px;
}
.t-vol {
    margin-left: 10px;
}
.clock {
    width: 48px;
    margin-left: 11px;
    font-size: 11.1px;
    line-height: 18px;
    text-align: center;
    display: flex;
    flex-direction: column;
    white-space: nowrap;
}
.t-note {
    margin-left: 21px;
}
.peek {
    width: 1px;
    height: 40px;
    margin-left: 20px;
    background: #5d6a7b;
}
```
